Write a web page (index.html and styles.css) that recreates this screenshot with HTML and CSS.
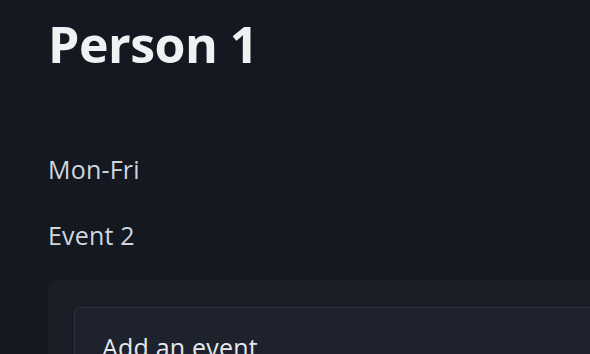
FILE: index.html
```
<!DOCTYPE html>
<html lang="en">
<head>
<meta charset="utf-8">
<title>Person 1</title>
<link rel="stylesheet" href="styles.css">
</head>
<body>
<main class="page">
  <h1 class="title">Person 1</h1>
  <p class="line line-first">Mon-Fri</p>
  <p class="line">Event 2</p>
  <section class="card">
    <div class="inner">
      <h2 class="inner-title">Add an event</h2>
    </div>
  </section>
</main>
</body>
</html>
```

FILE: styles.css
```
html, body {
  margin: 0;
  padding: 0;
  background: #141821;
  overflow: hidden;
}
body {
  font-family: "Open Sans", "Noto Sans", "Liberation Sans", sans-serif;
  color: #d0d5de;
}
.page {
  padding: 0 0 0 48px;
  display: flow-root;
}
.title {
  margin: 14px 0 0;
  font-size: 50px;
  line-height: 60px;
  font-weight: 700;
  color: #f0f1f3;
  letter-spacing: -0.5px;
}
.line {
  margin: 30px 0 0;
  font-size: 25px;
  line-height: 36px;
  letter-spacing: 0.2px;
}
.line-first {
  margin-top: 77px;
}
.card {
  margin-top: 27px;
  width: 700px;
  background: #1a1e26;
  border-radius: 8px;
  padding: 27px 26px;
}
.inner {
  background: #1e222c;
  border: 1px solid #2c313c;
  border-radius: 6px;
  padding: 21px 27px;
}
.inner-title {
  margin: 0;
  font-size: 25px;
  line-height: 36px;
  font-weight: 400;
  letter-spacing: 0.2px;
  color: #e6e8ec;
}
```
